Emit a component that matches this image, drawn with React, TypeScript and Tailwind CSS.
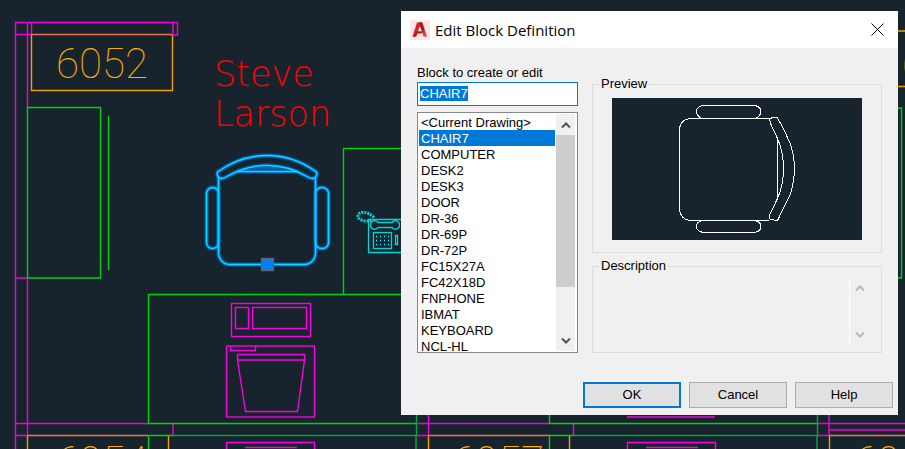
import { useEffect, useRef } from "react";

const blocks = [
  "<Current Drawing>",
  "CHAIR7",
  "COMPUTER",
  "DESK2",
  "DESK3",
  "DOOR",
  "DR-36",
  "DR-69P",
  "DR-72P",
  "FC15X27A",
  "FC42X18D",
  "FNPHONE",
  "IBMAT",
  "KEYBOARD",
  "NCL-HL",
];

// Selected chair, drawn several times: wide for the glow, thin for the line
function ChairLines() {
  return (
    <>
      <path d="M218.5 177V253a11.5 11.5 0 0 0 11.5 11.5H304a11.5 11.5 0 0 0 11.5-11.5V177" />
      <path d="M217.5 172Q240 155.500 267 155.500T316.500 172Q318 177 312.500 178.500Q310 178.500 307 176.500Q288 165.500 267 165.500T227 176.500Q224 178.500 221.500 178.500Q216 177 217.500 172Z" />
      <path d="M237 171.500H298" />
      <rect x="206.500" y="187.500" width="12" height="61" rx="6" />
      <rect x="315.500" y="187.500" width="13" height="61" rx="6" />
    </>
  );
}

function Phone() {
  return (
    <g stroke="#00d4dc" strokeWidth="1.3" fill="none">
      <path d="M402 219.500H368.500V252.500H402" />
      <path d="M374 217.500C368 211 359 211 358 215.500S366 222.500 372 220" strokeWidth="3" strokeDasharray="2 1" />
      <path d="M377 222.500H393M377 227.500H393" />
      <path d="M378 222.500C376 219.500 370.500 220.500 370.500 225S376 230.500 378 227.500" />
      <path d="M392 222.500C394 219.500 399.500 220.500 399.500 225S394 230.500 392 227.500" />
      <rect x="373.500" y="232.500" width="18" height="16" />
      <rect x="395.500" y="235.500" width="2" height="9" />
      <path d="M376 236.500H390M376 240.500H390M376 244.500H390" stroke="#00ffff" strokeDasharray="1 3" />
    </g>
  );
}

function FloorPlan() {
  return (
    <svg className="absolute inset-0 h-full w-full" fill="none" strokeWidth="1.4" aria-hidden="true">
      {/* walls */}
      <g stroke="#f000da">
        <path d="M15.500 22.500V449M27.500 22.500V108M27.500 278V436M31.500 23V35M15 22.500H177.500V35H173V23M15 34.500H31M15 278H27" />
        <path d="M15 423.500H148M15 435.500H27M173 424V435M416 423.500H549M416 435.500H428M428.500 414V436M573.500 424V435" />
        <path d="M817 423.500H905M817 435.500H829V414M829 430H905" />
      </g>

      {/* desks and partitions */}
      <g stroke="#00d20a">
        <path d="M27.500 278V107.500H100.500V278H27M108.500 116V270M401 148.500H343.500V294" />
        <path d="M401 294.500H148.500V423.500H416M148.500 449V435.500H173M549.500 414V423.500H817M549.500 449V436" />
        <path d="M173 435.500H416V449M416.500 414V436M573 435.500H817V449M817.500 414V436" stroke="#00a840" />
        <path d="M549 435.500H573M898 108H901.500V278H898" />
      </g>

      {/* room tags */}
      <g stroke="#f0a000">
        <path d="M31.500 35V90.500H172.500V35M27.500 436V449M168.500 436V449M428.500 436V449M569.500 436V449M829.500 436V449M898 31H905M898 86.500H905" />
        <path d="M31 34.500H172M27 435.500H148M428 435.500H549M829 435.500H905" stroke="#ea7348" />
      </g>
      <g stroke="none" className="fill-[#ffae00] font-['Roboto'] text-[42px] font-thin">
        <text x="56" y="78">6052</text>
        <text x="56" y="476">6054</text>
        <text x="452" y="476">6057</text>
        <text x="854" y="476">6056</text>
        <text x="902" y="78">6</text>
      </g>

      <g stroke="none" className="fill-[#ff0000] font-['DejaVu_Sans'] text-[35px] font-extralight">
        <text x="214" y="86">Steve</text>
        <text x="214" y="126">Larson</text>
      </g>

      {/* keyboard, monitor */}
      <g stroke="#fa00e4">
        <rect x="231.500" y="303.500" width="79" height="33" />
        <rect x="235.500" y="307.500" width="13" height="21" />
        <rect x="252.500" y="307.500" width="54" height="21" />
        <rect x="226.500" y="346" width="88" height="71" />
        <path d="M230.500 346V350.500H255.500V346M237.500 360V354.500H304.500V360H237.500L245.500 411.500H297.500L304.500 360" />
        <path d="M226.500 449V442.500H314.500V449M245 447.500H297M627.500 449V442.500H715.500V449M646 447.500H698M627 417H715" />
      </g>

      <Phone />

      <g stroke="#0070e0" strokeWidth="5" strokeOpacity="0.35">
        <ChairLines />
      </g>
      <g stroke="#0078ec" strokeWidth="3" strokeOpacity="0.7">
        <ChairLines />
      </g>
      <path d="M240 171Q267 160 295 171Z" fill="#0058a8" />
      <g stroke="#00dcff">
        <ChairLines />
      </g>
      <rect x="261.500" y="258.500" width="12" height="12" fill="#0080ff" stroke="#5f6468" />
    </svg>
  );
}

function ChairPreview() {
  return (
    <svg
      className="block h-[142px] w-full bg-[#18242d]"
      viewBox="0 0 250 142"
      fill="none"
      stroke="#ffffff"
      shapeRendering="crispEdges"
      role="img"
      aria-label="CHAIR7"
    >
      <path d="M157.500 20.500H79.500Q67.500 21 67.500 32.500V111Q68.500 122.500 80.500 122.500H157" />
      <path d="M90 20.500Q84.500 18 84.500 13.500T91 7.500H143Q149 9 149 13.500T143 20.500" />
      <path d="M90 122.500Q84.500 124 84.500 128.500T91 134.500H143Q149 133 149 128.500T143 122.500" />
      <path d="M165.500 20Q162 18 158.500 20.500Q157 22 159 26.500L165.500 40.500Q171.500 54 171.500 70.500T165.500 100.500L159 114Q156 119 158.500 121.500L165.500 122.500L178.500 96Q182.500 82 182.500 70.500T178.500 46.500Q173 32 165.500 20Z" />
      <path d="M165.500 40V101" />
    </svg>
  );
}

function Chevron({ up = false }: { up?: boolean }) {
  return (
    <svg className="h-[8px] w-[10px]" viewBox="0 0 10 8" fill="none" stroke="currentColor" strokeWidth="2">
      <path d={up ? "M1 6.500L5 2.500L9 6.500" : "M1 1.500L5 5.500L9 1.500"} />
    </svg>
  );
}

function AppLogo() {
  return (
    <svg className="h-[20px] w-[20px]" viewBox="0 0 20 20" aria-hidden="true">
      <rect width="20" height="20" fill="#fde7e2" />
      <path d="M7 2.500H12L9 11L6 16.500H2.500Z" fill="#d5232f" />
      <path d="M2.500 16.500L8 11.500L15 11L11 13.500H7L6 16.500Z" fill="#b3131f" />
      <path d="M9 2.500H12.500L17 16.500H13.500Z" fill="#e03c40" />
      <path d="M9 2.500L12 2.500L14 9L13 13Z" fill="#a8101c" />
      <path d="M9.500 6.500L8 11H11Z" fill="#fde7e2" />
    </svg>
  );
}

export default function App() {
  const nameRef = useRef<HTMLInputElement>(null);

  useEffect(() => {
    nameRef.current?.focus();
    nameRef.current?.select();
  }, []);

  return (
    <main className="relative flex min-h-screen items-start justify-end overflow-hidden bg-[#18242d] pt-[11px] pr-[7px]">
      <FloorPlan />

      <section
        role="dialog"
        aria-labelledby="dialog-title"
        className="relative w-[497px] bg-[#f0f0f0] font-['Liberation_Sans',Arial,sans-serif] text-[13px] leading-4 text-black"
      >
        {/* Title bar */}
        <header className="flex h-[37px] items-center bg-white pl-[9px]">
          <AppLogo />
          <h1 id="dialog-title" className="ml-[5px] flex-1 font-['Open_Sans',sans-serif] text-[15px]">
            Edit Block Definition
          </h1>
          <button type="button" aria-label="Close" className="flex h-full w-[42px] items-center justify-center">
            <svg className="h-[13px] w-[13px]" viewBox="0 0 13 13" stroke="#000000">
              <path d="M0.500 0.500L12.500 12.500M12.500 0.500L0.500 12.500" />
            </svg>
          </button>
        </header>

        <div className="flex gap-[14px] px-4 pt-4">
          {/* Block name and list */}
          <div className="w-[161px]">
            <label htmlFor="block-name" className="block leading-[18px]">
              Block to create or edit
            </label>
            <input
              id="block-name"
              ref={nameRef}
              defaultValue="CHAIR7"
              className="block h-6 w-full border border-[#0078d7] bg-white px-[2px] pb-[2px] outline-none selection:bg-[#0078d7] selection:text-white"
            />
            <div className="mt-[6px] flex h-[241px] border border-[#828790] bg-white p-px">
              <select
                size={15}
                defaultValue="CHAIR7"
                aria-label="Blocks"
                className="mr-px h-full min-w-0 flex-1 overflow-hidden outline-none [scrollbar-width:none]"
              >
                {blocks.map((name) => (
                  <option
                    key={name}
                    value={name}
                    className="h-4 min-h-0 px-[2px] pt-px pb-0 leading-[15px] checked:bg-[#0078d7] checked:bg-linear-to-r checked:from-[#0078d7] checked:to-[#0078d7] checked:text-white"
                  >
                    {name}
                  </option>
                ))}
              </select>
              <div className="mr-px flex w-[19px] flex-col bg-[#f0f0f0] text-[#505559]">
                <span className="flex h-[21px] items-center justify-center">
                  <Chevron up />
                </span>
                <span className="h-[152px] bg-[#cdcdcd]" />
                <span className="mt-auto flex h-[21px] items-center justify-center">
                  <Chevron />
                </span>
              </div>
            </div>
          </div>

          {/* Preview and description */}
          <div className="flex flex-1 flex-col gap-[5px] pt-3">
            <fieldset className="border border-[#dcdcdc] px-[19px] pt-[6px] pb-3">
              <legend className="-ml-[13px] px-[2px]">Preview</legend>
              <ChairPreview />
            </fieldset>
            <fieldset className="flex-1 border border-[#dcdcdc] pr-3 pb-[6px] pl-[19px]">
              <legend className="-ml-[13px] px-[2px]">Description</legend>
              <div className="mt-1 flex h-[67px]">
                <textarea
                  aria-label="Description"
                  readOnly
                  className="min-w-0 flex-1 resize-none border-r border-white bg-transparent outline-none"
                />
                <div className="flex w-[19px] flex-col items-center justify-between py-[6px] text-[#b8b8b8]">
                  <Chevron up />
                  <Chevron />
                </div>
              </div>
            </fieldset>
          </div>
        </div>

        {/* Buttons */}
        <footer className="flex justify-end gap-2 pt-[29px] pr-[5px] pb-[7px]">
          <button type="button" className="h-[26px] w-[98px] border-2 border-[#0078d7] bg-[#e1e1e1]">
            OK
          </button>
          <button type="button" className="h-[26px] w-[98px] border border-[#adadad] bg-[#e1e1e1]">
            Cancel
          </button>
          <button type="button" className="h-[26px] w-[98px] border border-[#adadad] bg-[#e1e1e1]">
            Help
          </button>
        </footer>
      </section>
    </main>
  );
}
